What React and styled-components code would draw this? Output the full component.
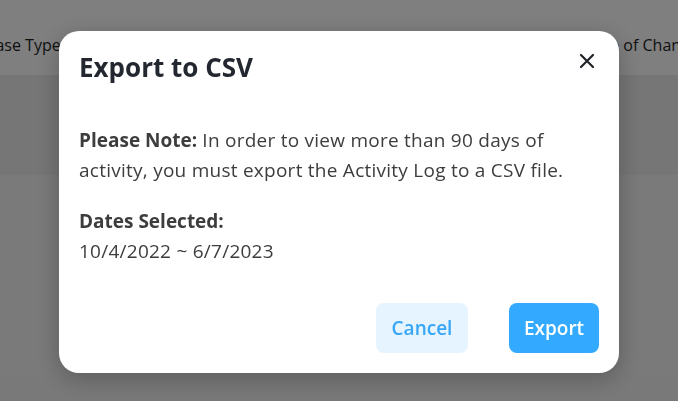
import React from 'react';
import styled, { createGlobalStyle } from 'styled-components';

const GlobalStyle = createGlobalStyle`
  html, body {
    margin: 0;
    padding: 0;
    width: 678px;
    height: 401px;
    overflow: hidden;
    background: #ffffff;
    font-family: "Open Sans", Lato, sans-serif;
  }
`;

const Page = styled.div`
  width: 678px;
  height: 401px;
  overflow: hidden;
  background: #f3f3f3;
`;

const Table = styled.div`
  width: 800px;
  margin-left: -48px;
`;

const HeaderRow = styled.div`
  display: grid;
  grid-template-columns: 140px 1fr 168px;
  align-items: center;
  height: 75px;
  background: #ffffff;
  font-size: 16px;
  color: #1e1e1e;
`;

const HeadCell = styled.div`
  padding-top: 15px;
  white-space: nowrap;
`;

const BandRow = styled.div`
  height: 100px;
  background: ${(p) => p.$tone};
`;

const Overlay = styled.div`
  position: fixed;
  inset: 0;
  background: rgba(0, 0, 0, 0.5);
  display: flex;
  align-items: center;
  justify-content: center;
`;

const Modal = styled.div`
  width: 560px;
  height: 342px;
  box-sizing: border-box;
  margin-top: 3px;
  background: #ffffff;
  border-radius: 20px;
  padding: 17px 20px 20px 20px;
  box-shadow: 0 6px 24px rgba(0, 0, 0, 0.25);
  display: flex;
  flex-direction: column;
`;

const Head = styled.div`
  display: flex;
  justify-content: space-between;
  align-items: flex-start;
`;

const Title = styled.h2`
  margin: 0;
  font-size: 26px;
  line-height: 38px;
  font-weight: 700;
  color: #23272f;
`;

const Close = styled.button`
  background: none;
  border: none;
  padding: 0;
  margin: 3px 2px 0 0;
  width: 20px;
  height: 20px;
  cursor: pointer;
  display: flex;
  align-items: center;
  justify-content: center;
`;

const Body = styled.div`
  margin-top: 39px;
  font-size: 19px;
  line-height: 30px;
  letter-spacing: 0.25px;
  color: #3d3d3d;
`;

const Para = styled.p`
  margin: 0 0 ${(p) => p.$gap || 0}px 0;
  max-width: 518px;
`;

const Strong = styled.span`
  font-weight: 700;
  letter-spacing: 0;
`;

const Footer = styled.div`
  margin-top: auto;
  display: flex;
  justify-content: flex-end;
  gap: 41px;
`;

const Button = styled.button`
  width: ${(p) => p.$w}px;
  height: 50px;
  padding: 0;
  border: none;
  border-radius: 8px;
  font-family: inherit;
  font-size: 19px;
  font-weight: 600;
  cursor: pointer;
  background: ${(p) => (p.$primary ? '#33aaff' : '#e6f4ff')};
  color: ${(p) => (p.$primary ? '#ffffff' : '#36a6f7')};
`;

export default function App() {
  return (
    <>
      <GlobalStyle />
      <Page>
        <Table>
          <HeaderRow>
            <HeadCell>Purchase Type</HeadCell>
            <HeadCell />
            <HeadCell>Date of Change</HeadCell>
          </HeaderRow>
          <BandRow $tone="#ececec" />
          <BandRow $tone="#f4f4f4" />
          <BandRow $tone="#f4f4f4" />
        </Table>
      </Page>
      <Overlay>
        <Modal>
          <Head>
            <Title>Export to CSV</Title>
            <Close aria-label="Close">
              <svg width="16" height="16" viewBox="0 0 16 16">
                <path d="M2 2 L14 14 M14 2 L2 14" stroke="#1f2329" strokeWidth="2.2" strokeLinecap="round" />
              </svg>
            </Close>
          </Head>
          <Body>
            <Para $gap={21}>
              <Strong>Please Note:</Strong> In order to view more than 90 days of activity, you must export the Activity Log to a CSV file.
            </Para>
            <Para>
              <Strong>Dates Selected:</Strong>
            </Para>
            <Para>10/4/2022 ~ 6/7/2023</Para>
          </Body>
          <Footer>
            <Button $w={92}>Cancel</Button>
            <Button $w={90} $primary>Export</Button>
          </Footer>
        </Modal>
      </Overlay>
    </>
  );
}
